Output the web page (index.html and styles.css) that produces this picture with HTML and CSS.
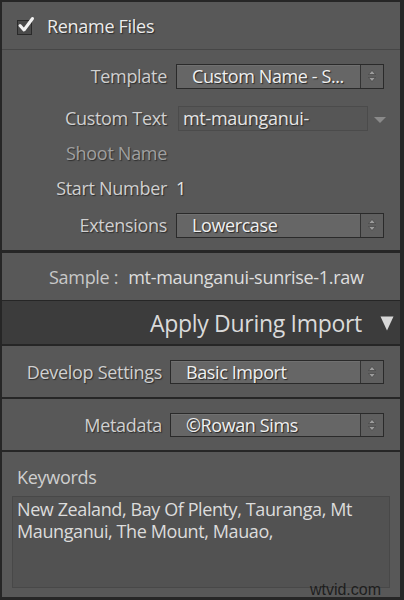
FILE: index.html
```html
<!DOCTYPE html>
<html>
<head>
<meta charset="utf-8">
<link rel="stylesheet" href="styles.css">
</head>
<body>
<div class="frame">
  <section class="panel rename">
    <div class="rename-head">
      <span class="checkbox">
        <svg class="check" viewBox="0 0 18 18" width="18" height="18"><path d="M3 9.5 L7 14 L15.5 2.5" fill="none" stroke="#f2f2f2" stroke-width="3" stroke-linecap="round" stroke-linejoin="round"/></svg>
      </span>
      <span class="head-title">Rename Files</span>
    </div>
    <div class="rows">
      <div class="row r-template">
        <span class="label">Template</span>
        <div class="select">
          <span class="select-text">Custom Name - S...</span>
          <span class="stepper"><svg viewBox="0 0 10 14" width="10" height="14"><path d="M5 1.5 L8.5 5.5 L1.5 5.5 Z M1.5 8.5 L8.5 8.5 L5 12.5 Z" fill="#9c9c9c" stroke="#3a3a3a" stroke-width="0.6"/></svg></span>
        </div>
      </div>
      <div class="row r-custom">
        <span class="label">Custom Text</span>
        <div class="textfield">mt-maunganui-</div>
        <svg class="dd" viewBox="0 0 12 6" width="12" height="6"><path d="M0 0 L12 0 L6 6 Z" fill="#8a8a8a"/></svg>
      </div>
      <div class="row">
        <span class="label dim">Shoot Name</span>
      </div>
      <div class="row">
        <span class="label">Start Number</span>
        <span class="value">1</span>
      </div>
      <div class="row r-ext">
        <span class="label">Extensions</span>
        <div class="select">
          <span class="select-text">Lowercase</span>
          <span class="stepper"><svg viewBox="0 0 10 14" width="10" height="14"><path d="M5 1.5 L8.5 5.5 L1.5 5.5 Z M1.5 8.5 L8.5 8.5 L5 12.5 Z" fill="#9c9c9c" stroke="#3a3a3a" stroke-width="0.6"/></svg></span>
        </div>
      </div>
    </div>
  </section>

  <section class="panel sample">
    <span class="sample-label">Sample :</span><span class="sample-value">mt-maunganui-sunrise-1.raw</span>
  </section>

  <header class="section-head">
    <span class="section-title">Apply During Import</span>
    <svg class="disclosure" viewBox="0 0 14 15" width="14" height="15"><path d="M0.5 0.5 L13.5 0.5 L7 14.5 Z" fill="#d8d8d8"/></svg>
  </header>

  <section class="panel single">
    <span class="label wide">Develop Settings</span>
    <div class="select wide-select">
      <span class="select-text">Basic Import</span>
      <span class="stepper"><svg viewBox="0 0 10 14" width="10" height="14"><path d="M5 1.5 L8.5 5.5 L1.5 5.5 Z M1.5 8.5 L8.5 8.5 L5 12.5 Z" fill="#9c9c9c" stroke="#3a3a3a" stroke-width="0.6"/></svg></span>
    </div>
  </section>

  <section class="panel single">
    <span class="label wide">Metadata</span>
    <div class="select wide-select">
      <span class="select-text">©Rowan Sims</span>
      <span class="stepper"><svg viewBox="0 0 10 14" width="10" height="14"><path d="M5 1.5 L8.5 5.5 L1.5 5.5 Z M1.5 8.5 L8.5 8.5 L5 12.5 Z" fill="#9c9c9c" stroke="#3a3a3a" stroke-width="0.6"/></svg></span>
    </div>
  </section>

  <section class="panel keywords">
    <div class="kw-label">Keywords</div>
    <div class="kw-box">New Zealand, Bay Of Plenty, Tauranga, Mt Maunganui, The Mount, Mauao,</div>
    <span class="watermark">wtvid.com</span>
  </section>
</div>
</body>
</html>
```

FILE: styles.css
```css
html, body {
  margin: 0;
  padding: 0;
  background: #262626;
}

.frame {
  width: 404px;
  height: 600px;
  background: #262626;
  padding: 2px 4px 0 2px;
  box-sizing: border-box;
  display: flex;
  flex-direction: column;
  font-family: "Open Sans", "Noto Sans", sans-serif;
  overflow: hidden;
}

.panel {
  background: #585858;
  position: relative;
}

.rename {
  height: 248px;
  flex: none;
}

.rename-head {
  height: 47px;
  border-bottom: 1px solid #464646;
  display: flex;
  align-items: center;
  padding-left: 15px;
  gap: 15px;
}

.checkbox {
  position: relative;
  width: 13px;
  height: 13px;
  border: 1px solid #2a2a2a;
  background: #4a4a4a;
  margin-top: 3px;
}

.check {
  position: absolute;
  left: -1px;
  top: -5px;
}

.head-title {
  font-size: 18px;
  color: #ececec;
  text-shadow: 1px 1px 1px #2a2a2a;
  letter-spacing: -0.3px;
}

.rows {
  display: flex;
  flex-direction: column;
  gap: 7px;
  padding-top: 12px;
}

.row {
  height: 28px;
  display: flex;
  align-items: center;
}

.r-custom {
  margin-top: 7px;
}

.r-ext {
  margin-top: 2px;
}

.label {
  width: 174px;
  box-sizing: border-box;
  text-align: right;
  font-size: 18px;
  color: #d0d0d0;
  text-shadow: 1px 1px 1px #2e2e2e;
  padding-right: 9px;
  flex: none;
  letter-spacing: -0.3px;
  white-space: nowrap;
}

.label.dim {
  color: #a0a0a0;
}

.value {
  font-size: 18px;
  color: #e6e6e6;
  text-shadow: 1px 1px 1px #2e2e2e;
}

.select {
  width: 208px;
  height: 25px;
  box-sizing: border-box;
  border: 1px solid #2a2a2a;
  background: #666666;
  box-shadow: inset 0 1px 0 #707070;
  display: flex;
  align-items: center;
}

.select-text {
  flex: 1;
  min-width: 0;
  padding-left: 15px;
  font-size: 18px;
  color: #f0f0f0;
  text-shadow: 1px 1px 1px #262626;
  white-space: nowrap;
  overflow: hidden;
  letter-spacing: -0.4px;
}

.stepper {
  width: 22px;
  height: 100%;
  border-left: 1px solid #333333;
  background: #5f5f5f;
  display: flex;
  align-items: center;
  justify-content: center;
  flex: none;
}

.textfield {
  width: 190px;
  height: 25px;
  box-sizing: border-box;
  margin-left: 2px;
  border: 1px solid #4b4b4b;
  background: #565656;
  font-size: 18px;
  color: #e6e6e6;
  text-shadow: 1px 1px 1px #2e2e2e;
  padding-left: 4px;
  line-height: 23px;
  letter-spacing: -0.3px;
}

.dd {
  margin-left: 6px;
  margin-top: 3px;
}

.sample {
  height: 47px;
  margin-top: 3px;
  flex: none;
  display: flex;
  align-items: center;
  padding-left: 47px;
  font-size: 18px;
  letter-spacing: -0.3px;
}

.sample-label {
  color: #c8c8c8;
  margin-right: 10px;
}

.sample-value {
  color: #dedede;
}

.section-head {
  height: 43px;
  margin-top: 1px;
  flex: none;
  background: #3c3c3c;
  display: flex;
  align-items: center;
  justify-content: flex-end;
  padding-right: 6px;
  gap: 18px;
}

.section-title {
  font-size: 23px;
  color: #dadada;
  letter-spacing: -0.3px;
}

.disclosure {
  margin-top: 1px;
}

.single {
  height: 51px;
  margin-top: 2px;
  flex: none;
  display: flex;
  align-items: center;
}

.label.wide {
  width: 168px;
  padding-right: 8px;
}

.wide-select {
  width: 214px;
  height: 24px;
}

.keywords {
  margin-top: 2px;
  height: 145px;
  flex: none;
  padding: 13px 10px 0 10px;
  box-sizing: border-box;
}

.kw-label {
  font-size: 18px;
  line-height: 24px;
  color: #cfcfcf;
  padding-left: 5px;
  letter-spacing: -0.3px;
}

.kw-box {
  margin-top: 7px;
  height: 92px;
  box-sizing: border-box;
  border: 1px solid #484848;
  background: #525252;
  padding: 1px 4px;
  font-size: 18px;
  line-height: 22px;
  color: #dcdcdc;
  letter-spacing: -0.4px;
}

.watermark {
  position: absolute;
  right: 19px;
  bottom: 0px;
  font-family: "Liberation Sans", sans-serif;
  font-size: 16px;
  line-height: 15px;
  color: #1e1e1e;
}
```
